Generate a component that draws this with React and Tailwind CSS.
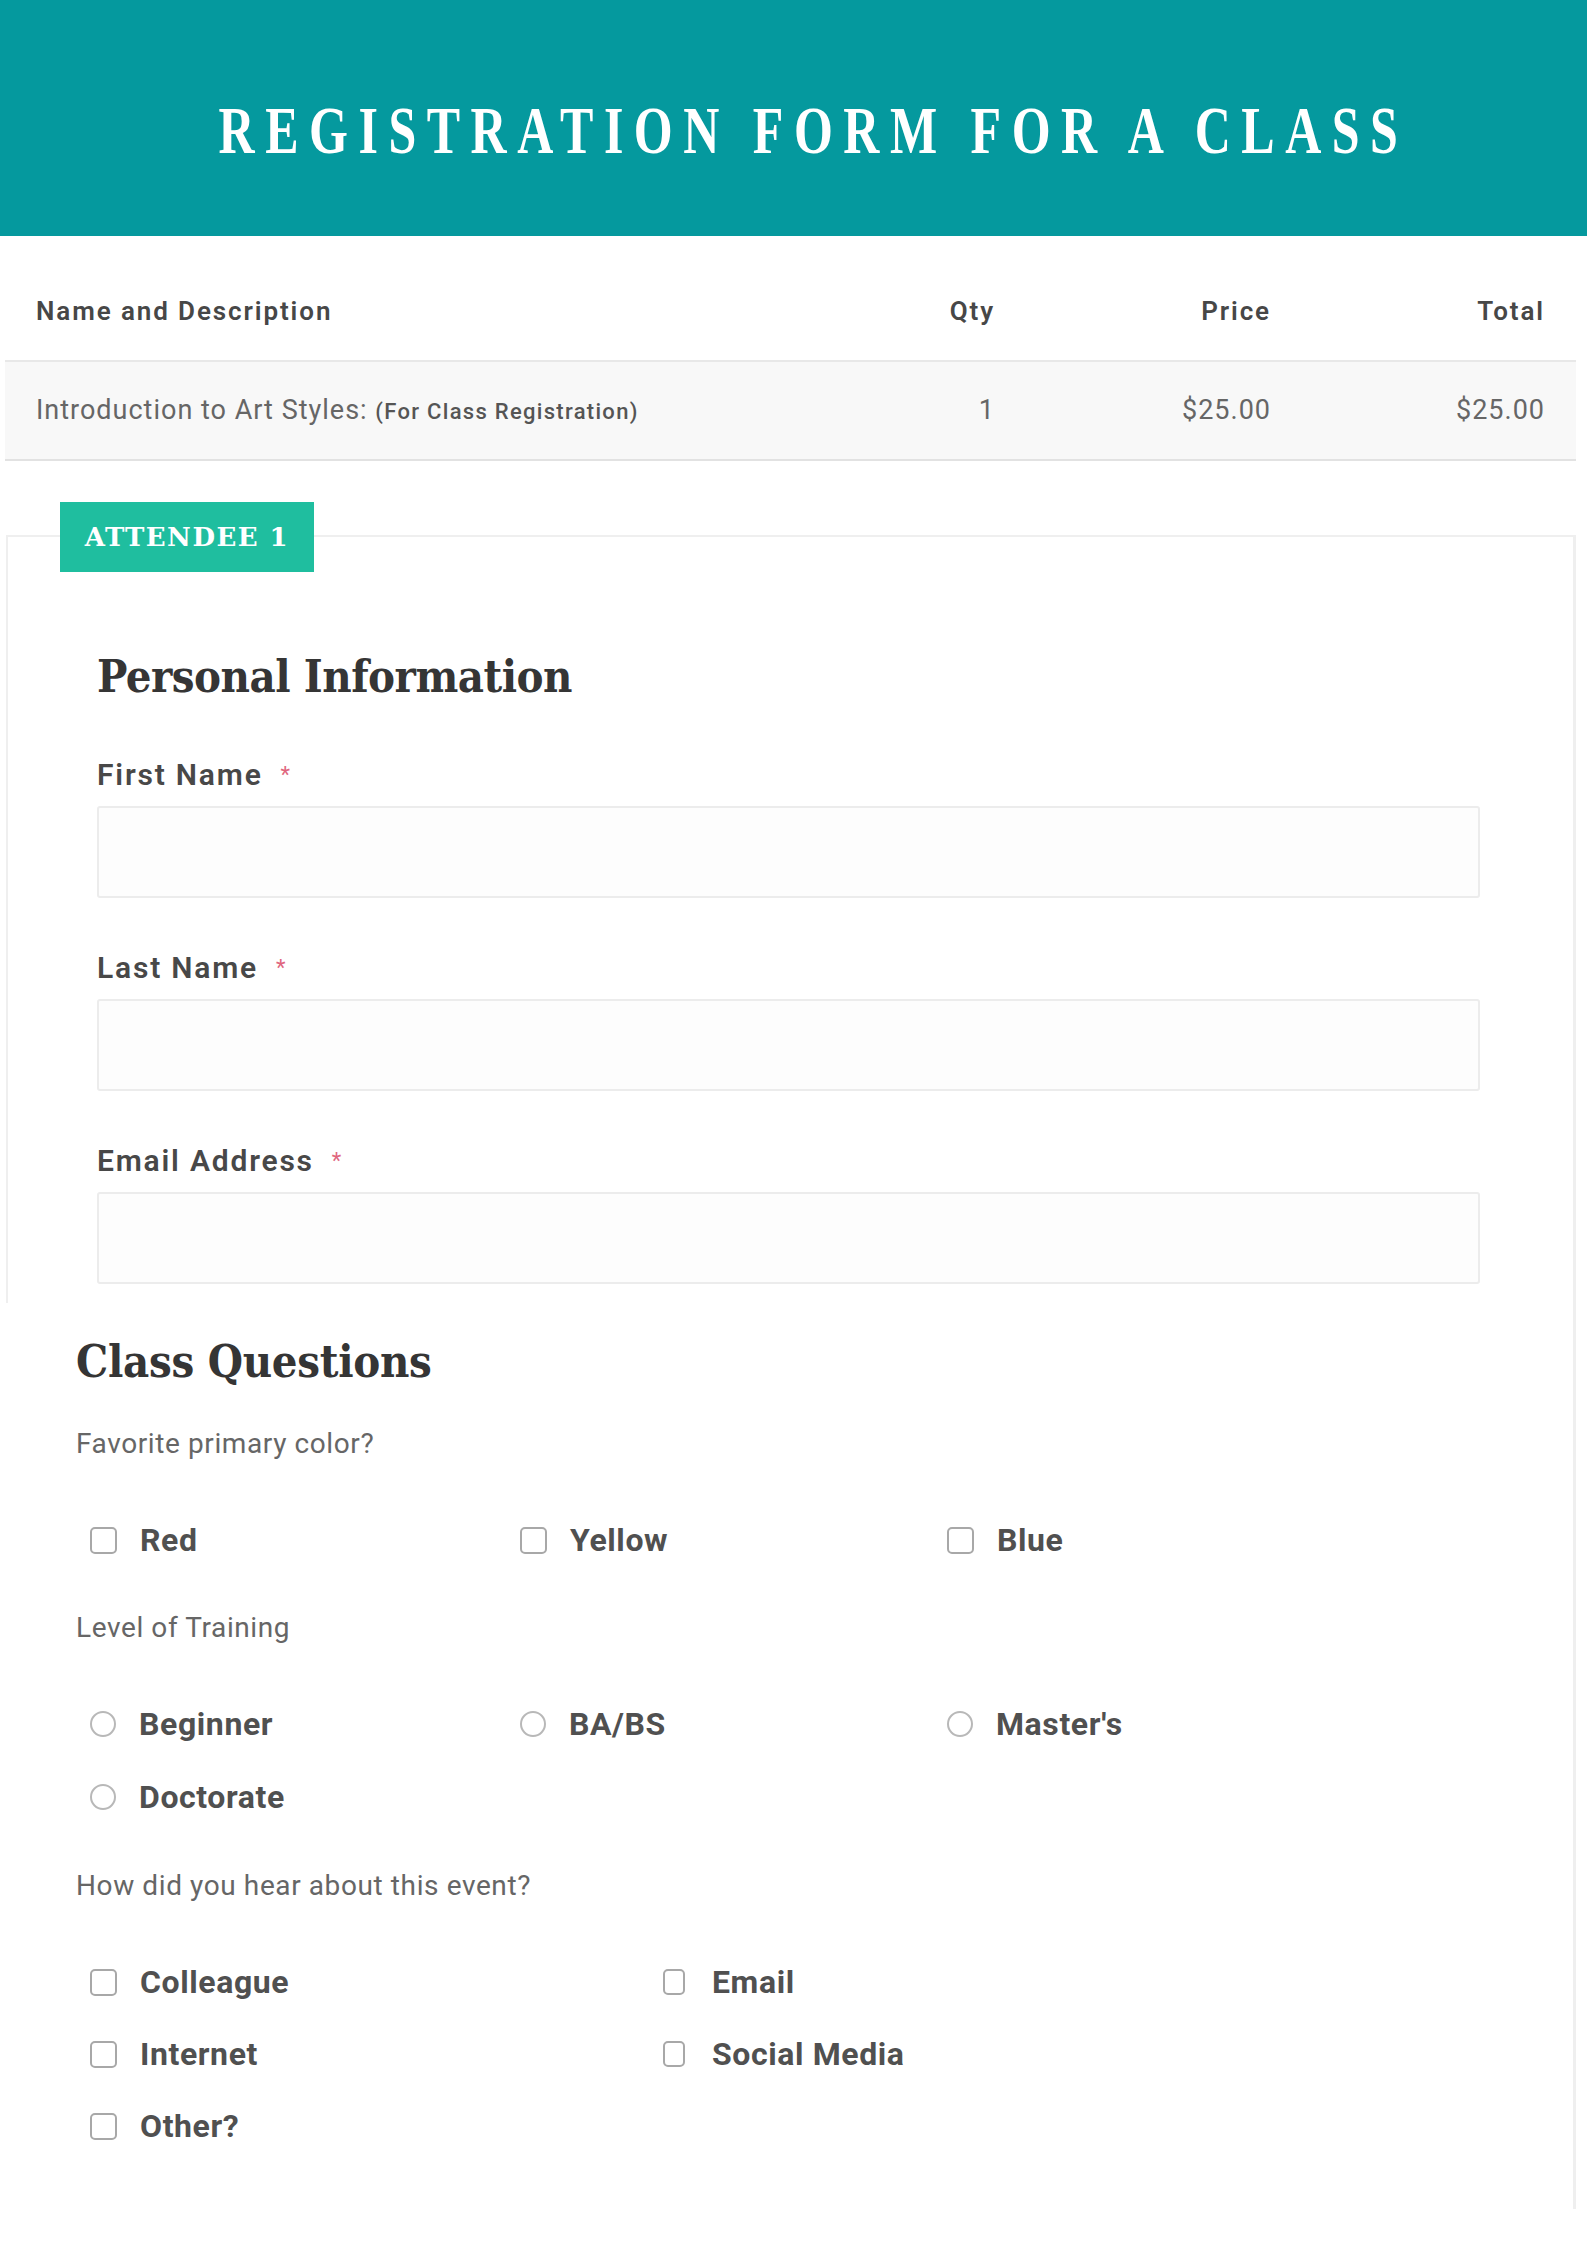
import React from "react";

function CheckBox({ small }) {
  return small ? (
    <span className="inline-block w-[22px] h-[26px] ml-[1px] border-2 border-[#a8a8a8] rounded-[5px] bg-white shrink-0" />
  ) : (
    <span className="inline-block w-[27px] h-[27px] border-2 border-[#a8a8a8] rounded-[5px] bg-white shrink-0" />
  );
}

function Radio() {
  return <span className="inline-block w-[26px] h-[26px] border-2 border-[#b8b8b8] rounded-full bg-white shrink-0" />;
}

function Option({ label, type = "check", small = false }) {
  return (
    <div className={`flex items-center ${small ? "gap-[27px]" : "gap-[23px]"} h-[40px]`}>
      {type === "radio" ? <Radio /> : <CheckBox small={small} />}
      <span className="text-[32px] leading-[40px] tracking-[0.6px] font-bold text-[#505050]">{label}</span>
    </div>
  );
}

function Field({ label, last }) {
  return (
    <div className={last ? "" : "mb-[50px]"}>
      <div className="h-[40px] leading-[40px] mb-[11px] text-[30px] font-semibold tracking-[1.8px] text-[#484848] flex items-center">
        <span>{label}</span>
        <span className="ml-[18px] text-[22px] text-[#e0667e] font-normal">*</span>
      </div>
      <div className="h-[92px] border-2 border-[#ececec] rounded-[3px] bg-[#fdfdfd]" />
    </div>
  );
}

export default function App() {
  return (
    <div className="w-[1587px] min-h-[2245px] bg-white font-['Roboto',sans-serif]">
      <header className="h-[236px] bg-[#05999e] flex items-center justify-center pt-[24px] pl-[40px]">
        <h1 className="inline-block scale-y-[1.35] text-white text-[50px] leading-none tracking-[10.5px] font-['Liberation_Serif',serif] font-bold whitespace-nowrap">
          REGISTRATION FORM FOR A CLASS
        </h1>
      </header>

      <div className="mt-[26px] ml-[5px] w-[1571px]">
        <div className="grid grid-cols-[1fr_140px_276px_274px] px-[31px] h-[100px] items-center border-b-2 border-[#e8e8e8] text-[26px] font-semibold tracking-[1.9px] text-[#474747]">
          <div>Name and Description</div>
          <div className="text-right">Qty</div>
          <div className="text-right">Price</div>
          <div className="text-right">Total</div>
        </div>
        <div className="grid grid-cols-[1fr_140px_276px_274px] px-[31px] h-[99px] items-center bg-[#f8f8f8] border-b-2 border-[#e2e2e2] text-[27px] tracking-[1px] text-[#666]">
          <div className="whitespace-nowrap">
            Introduction to Art Styles:{" "}
            <span className="text-[22px] font-medium tracking-[1.3px] text-[#555]">(For Class Registration)</span>
          </div>
          <div className="text-right">1</div>
          <div className="text-right">$25.00</div>
          <div className="text-right">$25.00</div>
        </div>
      </div>

      <div className="relative mt-[74px] ml-[6px] w-[1570px] border-t-2 border-r-[3px] border-[#efefef]">
        <div className="absolute top-[-35px] left-[54px] w-[254px] h-[70px] bg-[#1fbe9f] flex items-center justify-center">
          <span className="text-white text-[26px] font-bold tracking-[1.5px] font-['DejaVu_Serif',serif] leading-none">
            ATTENDEE 1
          </span>
        </div>

        <section className="border-l-2 border-[#efefef] pt-[112px] pl-[89px] pr-[93px] pb-[19px]">
          <h2 className="text-[45px] leading-[56px] mb-[50px] tracking-[-0.5px] font-['DejaVu_Serif_Condensed','DejaVu_Serif',serif] font-bold text-[#353535]">
            Personal Information
          </h2>
          <Field label="First Name" />
          <Field label="Last Name" />
          <Field label="Email Address" last />
        </section>

        <section className="pt-[31px] pl-[70px] pb-[63px]">
          <h2 className="text-[45px] leading-[56px] mb-[34px] tracking-[-0.3px] font-['DejaVu_Serif_Condensed','DejaVu_Serif',serif] font-bold text-[#353535]">
            Class Questions
          </h2>

          <p className="text-[28px] leading-[40px] tracking-[0.6px] text-[#666]">Favorite primary color?</p>
          <div className="mt-[56px] ml-[14px] grid grid-cols-[430px_427px_1fr]">
            <Option label="Red" />
            <Option label="Yellow" />
            <Option label="Blue" />
          </div>

          <p className="mt-[48px] text-[28px] leading-[40px] tracking-[0.6px] text-[#666]">Level of Training</p>
          <div className="mt-[56px] ml-[14px] grid grid-cols-[430px_427px_1fr] gap-y-[33px]">
            <Option label="Beginner" type="radio" />
            <Option label="BA/BS" type="radio" />
            <Option label="Master's" type="radio" />
            <Option label="Doctorate" type="radio" />
          </div>

          <p className="mt-[49px] text-[28px] leading-[40px] tracking-[0.6px] text-[#666]">How did you hear about this event?</p>
          <div className="mt-[56px] ml-[14px] grid grid-cols-[572px_1fr] gap-y-[32px]">
            <Option label="Colleague" />
            <Option label="Email" small />
            <Option label="Internet" />
            <Option label="Social Media" small />
            <Option label="Other?" />
          </div>
        </section>
      </div>
    </div>
  );
}
